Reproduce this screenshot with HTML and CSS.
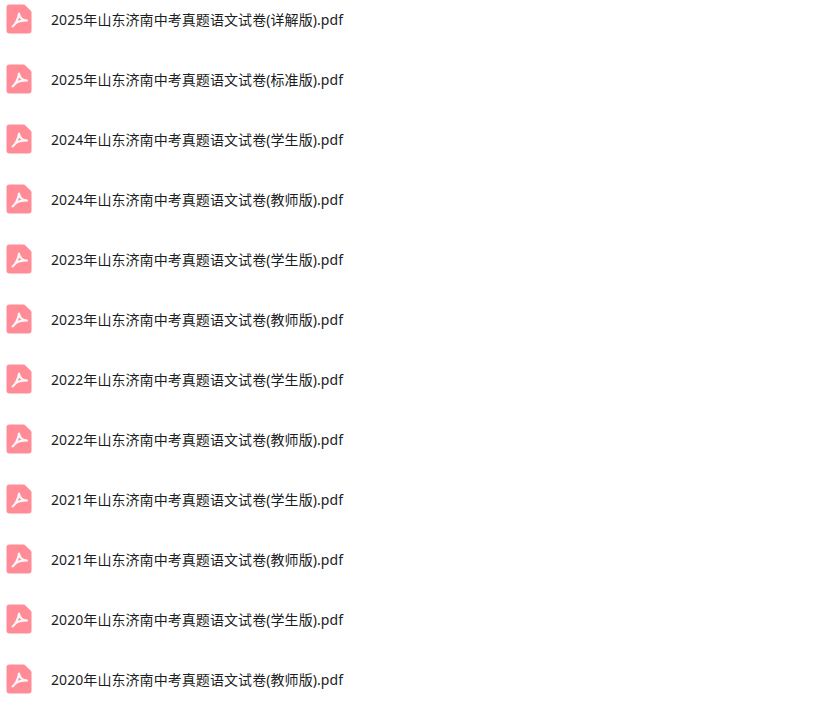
FILE: index.html
```html
<!DOCTYPE html>
<html lang="zh">
<head>
  <meta charset="UTF-8">
  <title>2025年山东济南中考真题语文试卷</title>
  <link rel="stylesheet" href="styles.css">
</head>
<body>
  <svg class="defs" width="0" height="0">
    <symbol id="pdf" viewBox="0 0 26 30">
      <path d="M3.5 .5H17.5Q18.5 .5 19.2 1.2L24.8 6.8Q25.5 7.5 25.5 8.5V26.5a3 3 0 0 1-3 3H3.5a3 3 0 0 1-3-3V3.5a3 3 0 0 1 3-3Z" fill="#ff8c97"/>
      <path d="M6.5 22.5C9 20.5 12 15 13 9.5C14 14.5 16.5 16.5 21 16.5C17 16.5 12 17 9.5 19.5C8.5 20.5 7.5 21.7 6.5 22.5Z" fill="none" stroke="#fff" stroke-width="2" stroke-linejoin="round" opacity=".95"/>
    </symbol>
  </svg>
  <ul class="file-list">
    <li class="file"><svg class="file-icon"><use href="#pdf"/></svg><span class="file-name">2025年山东济南中考真题语文试卷(详解版).pdf</span></li>
    <li class="file"><svg class="file-icon"><use href="#pdf"/></svg><span class="file-name">2025年山东济南中考真题语文试卷(标准版).pdf</span></li>
    <li class="file"><svg class="file-icon"><use href="#pdf"/></svg><span class="file-name">2024年山东济南中考真题语文试卷(学生版).pdf</span></li>
    <li class="file"><svg class="file-icon"><use href="#pdf"/></svg><span class="file-name">2024年山东济南中考真题语文试卷(教师版).pdf</span></li>
    <li class="file"><svg class="file-icon"><use href="#pdf"/></svg><span class="file-name">2023年山东济南中考真题语文试卷(学生版).pdf</span></li>
    <li class="file"><svg class="file-icon"><use href="#pdf"/></svg><span class="file-name">2023年山东济南中考真题语文试卷(教师版).pdf</span></li>
    <li class="file"><svg class="file-icon"><use href="#pdf"/></svg><span class="file-name">2022年山东济南中考真题语文试卷(学生版).pdf</span></li>
    <li class="file"><svg class="file-icon"><use href="#pdf"/></svg><span class="file-name">2022年山东济南中考真题语文试卷(教师版).pdf</span></li>
    <li class="file"><svg class="file-icon"><use href="#pdf"/></svg><span class="file-name">2021年山东济南中考真题语文试卷(学生版).pdf</span></li>
    <li class="file"><svg class="file-icon"><use href="#pdf"/></svg><span class="file-name">2021年山东济南中考真题语文试卷(教师版).pdf</span></li>
    <li class="file"><svg class="file-icon"><use href="#pdf"/></svg><span class="file-name">2020年山东济南中考真题语文试卷(学生版).pdf</span></li>
    <li class="file"><svg class="file-icon"><use href="#pdf"/></svg><span class="file-name">2020年山东济南中考真题语文试卷(教师版).pdf</span></li>
  </ul>
</body>
</html>
```
FILE: styles.css
```css
html, body {
  margin: 0;
  padding: 0;
  background: #fff;
  overflow: hidden;
}
body {
  font-family: "Noto Sans", "Noto Sans CJK SC", sans-serif;
  font-size: 14px;
  letter-spacing: 0.07px;
  color: #1a1d22;
}
.defs {
  display: block;
  height: 0;
}
.file-list {
  list-style: none;
  margin: 0;
  padding: 0 0 0 6px;
}
.file {
  display: flex;
  align-items: center;
  height: 60px;
  margin-top: -10px;
  margin-bottom: 10px;
}
.file-icon {
  width: 26px;
  height: 30px;
  flex: none;
  margin-top: -2px;
}
.file-name {
  margin-left: 19px;
  line-height: 20px;
}
```
